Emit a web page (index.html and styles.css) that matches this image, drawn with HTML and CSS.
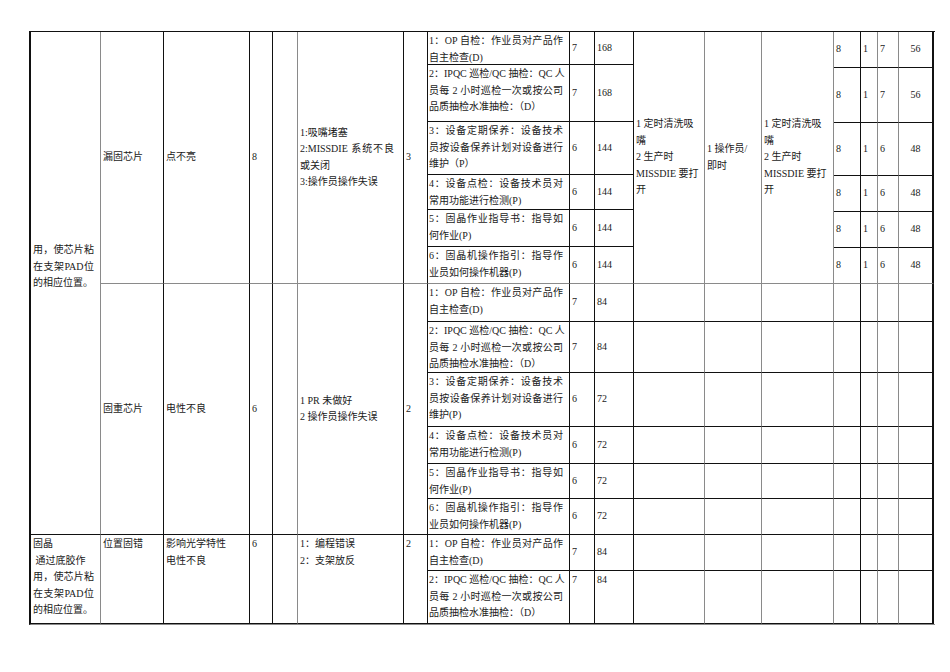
FILE: index.html
```html
<!DOCTYPE html>
<html lang="zh-CN">
<head>
<meta charset="utf-8">
<title>FMEA</title>
<link rel="stylesheet" href="styles.css">
</head>
<body>
<div class="page">
<div class="sheet">
  <!-- R1 -->
  <div class="cell r17 g pr7 first"><div class="l j">用，使芯片粘</div><div class="l j">在支架PAD位</div><div class="l">的相应位置。</div></div>
  <div class="cell r11 mid gb"><div class="l">漏固芯片</div></div>
  <div class="cell r11 mid gb"><div class="l">点不亮</div></div>
  <div class="cell r11 mid gb"><div class="l">8</div></div>
  <div class="cell r11 g gb"></div>
  <div class="cell r11 mid gb pr9"><div class="l">1:吸嘴堵塞</div><div class="l j">2:MISSDIE 系统不良</div><div class="l">或关闭</div><div class="l">3:操作员操作失误</div></div>
  <div class="cell r11 mid gb"><div class="l">3</div></div>
  <div class="cell step"><div class="l j">1：OP 自检：作业员对产品作</div><div class="l">自主检查(D)</div></div>
  <div class="cell mid"><div class="l">7</div></div>
  <div class="cell mid"><div class="l">168</div></div>
  <div class="cell r11 mid g gb"><div class="l">1 定时清洗吸</div><div class="l">嘴</div><div class="l">2 生产时</div><div class="l">MISSDIE 要打</div><div class="l">开</div></div>
  <div class="cell r11 mid g gb"><div class="l">1 操作员/</div><div class="l">即时</div></div>
  <div class="cell r11 mid g gb"><div class="l">1 定时清洗吸</div><div class="l">嘴</div><div class="l">2 生产时</div><div class="l">MISSDIE 要打</div><div class="l">开</div></div>
  <div class="cell r2 mid"><div class="l">8</div></div>
  <div class="cell r2 mid g"><div class="l">1</div></div>
  <div class="cell r2 mid g"><div class="l">7</div></div>
  <div class="cell r2 mid ctr last"><div class="l">56</div></div>
  <!-- R2 -->
  <div class="cell r2 step"><div class="l j">2：IPQC 巡检/QC 抽检：QC 人</div><div class="l j">员每 2 小时巡检一次或按公司</div><div class="l">品质抽检水准抽检：（D）</div></div>
  <div class="cell r2 mid"><div class="l">7</div></div>
  <div class="cell r2 mid"><div class="l">168</div></div>
  <!-- R3 -->
  <div class="cell r2 mid"><div class="l">8</div></div>
  <div class="cell r2 mid g"><div class="l">1</div></div>
  <div class="cell r2 mid g"><div class="l">7</div></div>
  <div class="cell r2 mid ctr last"><div class="l">56</div></div>
  <!-- R4 -->
  <div class="cell r2 step"><div class="l j">3：设备定期保养：设备技术</div><div class="l j">员按设备保养计划对设备进行</div><div class="l">维护（P）</div></div>
  <div class="cell r2 mid"><div class="l">6</div></div>
  <div class="cell r2 mid"><div class="l">144</div></div>
  <!-- R5 -->
  <div class="cell r2 mid"><div class="l">8</div></div>
  <div class="cell r2 mid g"><div class="l">1</div></div>
  <div class="cell r2 mid g"><div class="l">6</div></div>
  <div class="cell r2 mid ctr last"><div class="l">48</div></div>
  <!-- R6 -->
  <div class="cell r2 step"><div class="l j">4：设备点检：设备技术员对</div><div class="l">常用功能进行检测(P)</div></div>
  <div class="cell r2 mid"><div class="l">6</div></div>
  <div class="cell r2 mid"><div class="l">144</div></div>
  <!-- R7 -->
  <div class="cell r2 mid"><div class="l">8</div></div>
  <div class="cell r2 mid g"><div class="l">1</div></div>
  <div class="cell r2 mid g"><div class="l">6</div></div>
  <div class="cell r2 mid ctr last"><div class="l">48</div></div>
  <!-- R8 -->
  <div class="cell r2 step"><div class="l j">5：固晶作业指导书：指导如</div><div class="l">何作业(P)</div></div>
  <div class="cell r2 mid"><div class="l">6</div></div>
  <div class="cell r2 mid"><div class="l">144</div></div>
  <!-- R9 -->
  <div class="cell r2 mid"><div class="l">8</div></div>
  <div class="cell r2 mid g"><div class="l">1</div></div>
  <div class="cell r2 mid g"><div class="l">6</div></div>
  <div class="cell r2 mid ctr last"><div class="l">48</div></div>
  <!-- R10 -->
  <div class="cell r2 step gb"><div class="l j">6：固晶机操作指引：指导作</div><div class="l">业员如何操作机器(P)</div></div>
  <div class="cell r2 mid gb"><div class="l">6</div></div>
  <div class="cell r2 mid gb"><div class="l">144</div></div>
  <!-- R11 -->
  <div class="cell mid gb"><div class="l">8</div></div>
  <div class="cell mid g gb"><div class="l">1</div></div>
  <div class="cell mid g gb"><div class="l">6</div></div>
  <div class="cell mid ctr last gb"><div class="l">48</div></div>

  <!-- Block B, R12 -->
  <div class="cell r6 mid"><div class="l">固重芯片</div></div>
  <div class="cell r6 mid"><div class="l">电性不良</div></div>
  <div class="cell r6 mid"><div class="l">6</div></div>
  <div class="cell r6 g"></div>
  <div class="cell r6 mid"><div class="l">1 PR 未做好</div><div class="l">2 操作员操作失误</div></div>
  <div class="cell r6 mid"><div class="l">2</div></div>
  <div class="cell step"><div class="l j">1：OP 自检：作业员对产品作</div><div class="l">自主检查(D)</div></div>
  <div class="cell mid"><div class="l">7</div></div>
  <div class="cell mid"><div class="l">84</div></div>
  <div class="cell g"></div><div class="cell g"></div><div class="cell g"></div><div class="cell"></div><div class="cell g"></div><div class="cell g"></div><div class="cell last"></div>
  <!-- R13 -->
  <div class="cell step"><div class="l j">2：IPQC 巡检/QC 抽检：QC 人</div><div class="l j">员每 2 小时巡检一次或按公司</div><div class="l">品质抽检水准抽检：（D）</div></div>
  <div class="cell mid"><div class="l">7</div></div>
  <div class="cell mid"><div class="l">84</div></div>
  <div class="cell g"></div><div class="cell g"></div><div class="cell g"></div><div class="cell"></div><div class="cell g"></div><div class="cell g"></div><div class="cell last"></div>
  <!-- R14 -->
  <div class="cell step"><div class="l j">3：设备定期保养：设备技术</div><div class="l j">员按设备保养计划对设备进行</div><div class="l">维护(P)</div></div>
  <div class="cell mid"><div class="l">6</div></div>
  <div class="cell mid"><div class="l">72</div></div>
  <div class="cell g"></div><div class="cell g"></div><div class="cell g"></div><div class="cell"></div><div class="cell g"></div><div class="cell g"></div><div class="cell last"></div>
  <!-- R15 -->
  <div class="cell step"><div class="l j">4：设备点检：设备技术员对</div><div class="l">常用功能进行检测(P)</div></div>
  <div class="cell mid"><div class="l">6</div></div>
  <div class="cell mid"><div class="l">72</div></div>
  <div class="cell g"></div><div class="cell g"></div><div class="cell g"></div><div class="cell"></div><div class="cell g"></div><div class="cell g"></div><div class="cell last"></div>
  <!-- R16 -->
  <div class="cell step"><div class="l j">5：固晶作业指导书：指导如</div><div class="l">何作业(P)</div></div>
  <div class="cell mid"><div class="l">6</div></div>
  <div class="cell mid"><div class="l">72</div></div>
  <div class="cell g"></div><div class="cell g"></div><div class="cell g"></div><div class="cell"></div><div class="cell g"></div><div class="cell g"></div><div class="cell last"></div>
  <!-- R17 -->
  <div class="cell step"><div class="l j">6：固晶机操作指引：指导作</div><div class="l">业员如何操作机器(P)</div></div>
  <div class="cell mid"><div class="l">6</div></div>
  <div class="cell mid"><div class="l">72</div></div>
  <div class="cell g"></div><div class="cell g"></div><div class="cell g"></div><div class="cell"></div><div class="cell g"></div><div class="cell g"></div><div class="cell last"></div>

  <!-- Block C, R18 -->
  <div class="cell r2 g pr7"><div class="l">固晶</div><div class="l">&nbsp;通过底胶作</div><div class="l j">用，使芯片粘</div><div class="l j">在支架PAD位</div><div class="l">的相应位置。</div></div>
  <div class="cell r2"><div class="l">位置固错</div></div>
  <div class="cell r2"><div class="l">影响光学特性</div><div class="l">电性不良</div></div>
  <div class="cell r2"><div class="l">6</div></div>
  <div class="cell r2 g"></div>
  <div class="cell r2"><div class="l">1：编程错误</div><div class="l">2：支架放反</div></div>
  <div class="cell r2"><div class="l">2</div></div>
  <div class="cell step"><div class="l j">1：OP 自检：作业员对产品作</div><div class="l">自主检查(D)</div></div>
  <div class="cell mid"><div class="l">7</div></div>
  <div class="cell mid"><div class="l">84</div></div>
  <div class="cell g"></div><div class="cell g"></div><div class="cell g"></div><div class="cell"></div><div class="cell g"></div><div class="cell g"></div><div class="cell last"></div>
  <!-- R19 -->
  <div class="cell step"><div class="l j">2：IPQC 巡检/QC 抽检：QC 人</div><div class="l j">员每 2 小时巡检一次或按公司</div><div class="l">品质抽检水准抽检：（D）</div></div>
  <div class="cell"><div class="l">7</div></div>
  <div class="cell"><div class="l">84</div></div>
  <div class="cell g"></div><div class="cell g"></div><div class="cell g"></div><div class="cell"></div><div class="cell g"></div><div class="cell g"></div><div class="cell last"></div>
</div>
</div>
</body>
</html>
```

FILE: styles.css
```css
html, body {
  margin: 0;
  padding: 0;
  background: #ffffff;
}

.page {
  padding: 31px 0 0 29px;
}

.sheet {
  display: grid;
  width: 904px;
  grid-template-columns: 70px 63px 86px 23px 25px 106px 24px 142px 25px 39px 71px 57px 72px 27px 17px 21px 35px;
  grid-template-rows: 33px 3px 54px 1px 52px 1px 34px 2px 35px 1px 36px 38px 51px 54px 37px 35px 36px 36px 53px;
  border-top: 1px solid #111;
  border-left: 2px solid #111;
  border-bottom: 1px solid #8a8a8a;
  font-family: "Liberation Serif", "Noto Sans CJK SC", serif;
  font-size: 10px;
  line-height: 16.5px;
  color: #1a1a1a;
}

.cell {
  box-sizing: border-box;
  border-right: 1px solid #111;
  border-bottom: 1px solid #111;
  padding: 1px 2px 0 2px;
  display: flex;
  flex-direction: column;
  justify-content: flex-start;
  min-width: 0;
  overflow: hidden;
}

.r2 { grid-row: span 2; }
.r6 { grid-row: span 6; }
.r11 { grid-row: span 11; }
.r17 { grid-row: span 17; }

.mid { justify-content: center; padding-top: 0; }
.ctr { text-align: center; }

.g { border-right-color: #8a8a8a; }
.gb { border-bottom-color: #8a8a8a; }
.last { border-right: 2px solid #111; }

.first { padding-top: 210px; }
.pr7 { padding-right: 6px; }
.pr9 { padding-right: 9px; }

.step {
  padding: 1px 6px 0 1px;
}

.l {
  white-space: nowrap;
}

.j {
  text-align: justify;
  text-align-last: justify;
}
```
